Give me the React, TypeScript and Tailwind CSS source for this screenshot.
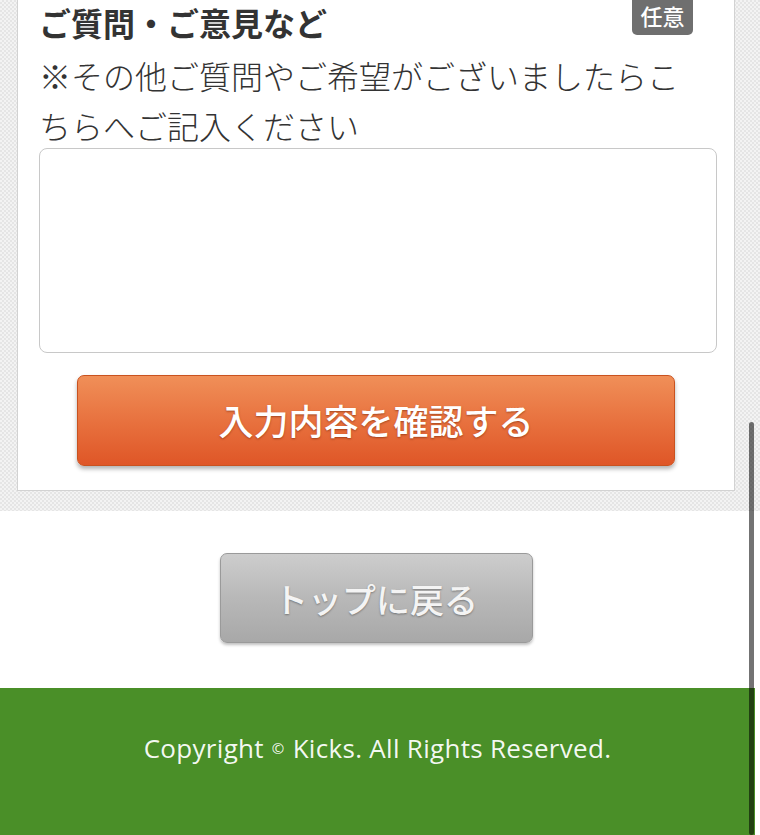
import React from "react";

export default function App() {
  return (
    <div className="relative w-[760px] h-[835px] overflow-hidden bg-white font-['Noto_Sans_CJK_JP',sans-serif]">
      {/* gray patterned section */}
      <div className="bg-[#eeeeee] bg-[image:repeating-conic-gradient(#e5e5e5_0_25%,#f3f3f3_0_50%)] bg-[length:4px_4px] pl-[17px] pr-[25px] pb-[20px]">
        <div className="relative w-[718px] bg-white border border-t-0 border-[#d2d2d2] pl-[21px] pr-[16px] pb-[24px]">
          <span className="absolute right-[41px] top-[-6px] w-[61px] h-[41px] pt-[4px] rounded-[5px] bg-[#6f6f6f] text-white text-[22px] leading-[34px] font-medium text-center">
            任意
          </span>
          <h2 className="pt-[2px] text-[32px] leading-[40px] font-bold text-[#333333]">
            ご質問・ご意見など
          </h2>
          <p className="mt-[8px] text-[32px] leading-[50px] text-[#333333] font-light">
            ※その他ご質問やご希望がございましたらこ
            <br />
            ちらへご記入ください
          </p>
          <textarea className="block mt-[-2px] w-[678px] h-[205px] rounded-[8px] border-[1.5px] border-[#c8c8c8] bg-white resize-none outline-none" />
          <button className="mt-[22px] ml-[38px] w-[598px] h-[91px] rounded-[7px] border border-[#c9521f] bg-[linear-gradient(to_bottom,#f08f58,#e8723f_50%,#df5627)] shadow-[0_3px_4px_rgba(0,0,0,0.3)] text-white text-[35px] font-medium [text-shadow:0_1px_2px_rgba(120,40,10,0.6)] flex items-center justify-center">
            入力内容を確認する
          </button>
        </div>
      </div>

      {/* white area with back button */}
      <div className="w-[752px] flex justify-center pt-[42px] pb-[45px]">
        <button className="w-[313px] h-[90px] rounded-[7px] border border-[#9a9a9a] bg-[linear-gradient(to_bottom,#cdcdcd,#b8b8b8_50%,#a8a8a8)] shadow-[0_2px_3px_rgba(0,0,0,0.25)] text-[#f4f4f4] text-[34px] font-medium [text-shadow:0_1px_2px_rgba(0,0,0,0.35)] flex items-center justify-center">
          トップに戻る
        </button>
      </div>

      {/* footer */}
      <footer className="w-[755px] h-[147px] bg-[#4a8f28] flex justify-center pt-[44px]">
        <p className="h-[32px] text-white/95 text-[26px] leading-[32px] font-['Open_Sans',sans-serif] tracking-[0.3px] flex items-center">
          Copyright <span className="text-[15px] mx-[8px]">©</span> Kicks. All Rights Reserved.
        </p>
      </footer>

      {/* scrollbar */}
      <div className="absolute right-[6px] top-[422px] bottom-0 w-[5px] rounded-full bg-black/55" />
    </div>
  );
}
